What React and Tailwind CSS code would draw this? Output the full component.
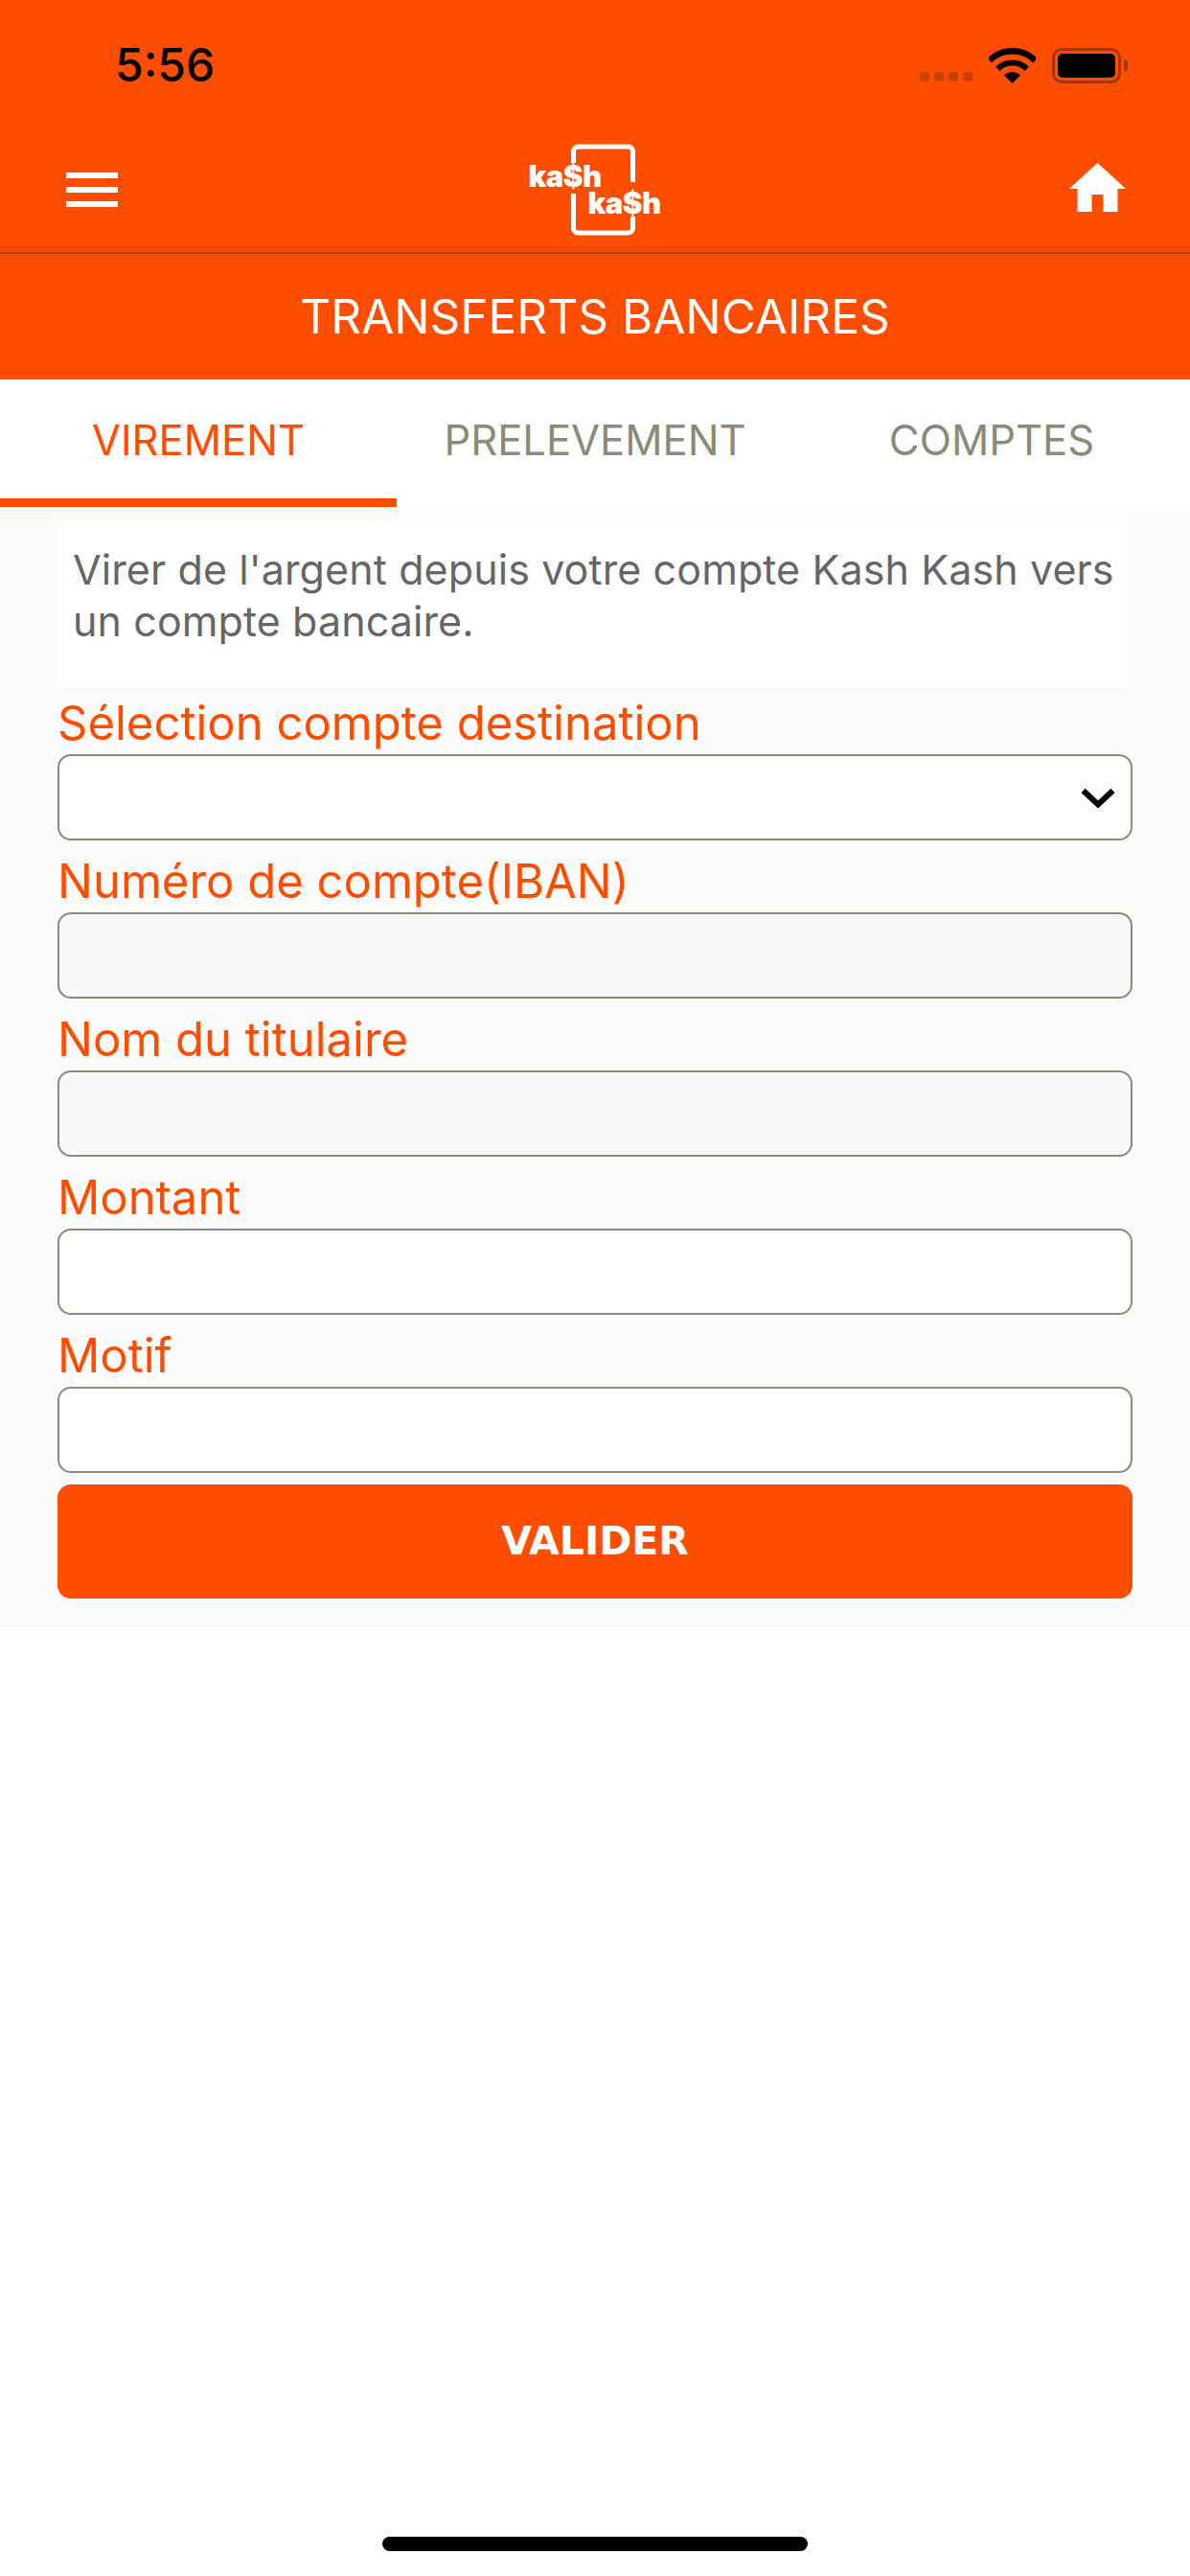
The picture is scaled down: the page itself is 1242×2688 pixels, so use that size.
const fields = [
  { label: 'Numéro de compte(IBAN)', disabled: true },
  { label: 'Nom du titulaire', disabled: true },
  { label: 'Montant' },
  { label: 'Motif' },
];

const StatusBar = () => (
  <div className="h-[136px] flex items-center justify-between pl-[120px] pr-[65px]">
    <span className="text-[48px] font-medium text-black leading-none font-['Inter',sans-serif]">5:56</span>
    <div className="flex items-center">
      <div className="flex gap-[5px] mt-[24px] mr-[17px]">
        <div className="w-[10px] h-[10px] rounded-[3px] bg-[#c94000]" />
        <div className="w-[10px] h-[10px] rounded-[3px] bg-[#c94000]" />
        <div className="w-[10px] h-[10px] rounded-[3px] bg-[#c94000]" />
        <div className="w-[10px] h-[10px] rounded-[3px] bg-[#c94000]" />
      </div>
      <svg width="49" height="37" viewBox="0 0 49 37" className="mr-[17px]">
        <path d="M0.64 13.14A33.75 33.75 0 0 1 48.36 13.14" fill="none" stroke="#000" strokeWidth="6.5" />
        <path d="M9.3 21.8A21.5 21.5 0 0 1 39.7 21.8" fill="none" stroke="#000" strokeWidth="6" />
        <path d="M24.5 37L16 28.5A12 12 0 0 1 33 28.5Z" fill="#000" />
      </svg>
      <div className="w-[72px] h-[37px] rounded-[10px] border-[3px] border-[#a83300] p-[3px]">
        <div className="w-full h-full rounded-[5px] bg-black" />
      </div>
      <div className="w-[4px] h-[13px] ml-[3px] rounded-r-full bg-[#a83300]" />
    </div>
  </div>
);

const Logo = () => (
  <div className="relative w-[136px] h-[96px]">
    <svg width="136" height="96" viewBox="0 0 136 96" className="block">
      <path
        d="M46.5 20V8a5 5 0 0 1 5-5H103.5a5 5 0 0 1 5 5V40M108.5 76V88a5 5 0 0 1-5 5H51.5a5 5 0 0 1-5-5V52"
        fill="none"
        stroke="#fff"
        strokeWidth="5"
      />
    </svg>
    <span className="absolute left-0 top-[18px] text-[31px] font-black tracking-[-0.5px] leading-none text-white font-['Inter',sans-serif]">ka$h</span>
    <span className="absolute left-[62px] top-[46px] text-[31px] font-black tracking-[-0.5px] leading-none text-white font-['Inter',sans-serif]">ka$h</span>
  </div>
);

const Header = () => (
  <div className="bg-[#ff4d00]">
    <StatusBar />
    <div className="h-[129px] border-b-2 border-[#a8430f] flex items-center justify-between pl-[69px] pr-[67px] pb-[3px]">
      <div className="flex flex-col gap-[9px] w-[54px]">
        <div className="h-[6px] bg-white" />
        <div className="h-[6px] bg-white" />
        <div className="h-[6px] bg-white" />
      </div>
      <Logo />
      <svg width="59" height="51" viewBox="0 0 59 51" fill="#fff" className="mb-[5px]">
        <path d="M29.5 0L59 27H50.5V51H35.5V33H23.5V51H8.5V27H0Z" />
      </svg>
    </div>
    <div className="h-[131px] flex items-center justify-center text-[49.5px] text-white font-['Inter',sans-serif]">
      TRANSFERTS BANCAIRES
    </div>
  </div>
);

const Tabs = () => (
  <div className="grid grid-cols-3 h-[133px] bg-white text-[43.5px] font-['Inter',sans-serif]">
    <div className="flex items-center justify-center border-b-[9px] border-[#ff4d00] text-[#ff4d00] pt-[4px]">VIREMENT</div>
    <div className="flex items-center justify-center text-[#8c8a78] pb-[5px]">PRELEVEMENT</div>
    <div className="flex items-center justify-center text-[#8c8a78] pb-[5px]">COMPTES</div>
  </div>
);

const Label = ({ children }) => (
  <label className="block h-[54px] text-[49px] leading-[44px] text-[#ff4d00]">{children}</label>
);

const inputClass = 'block w-full h-[90px] rounded-[14px] border-2 border-[#8c8a78] outline-none';

const App = () => (
  <div className="relative h-[2688px] bg-white font-['Inter',sans-serif]">
    <Header />
    <Tabs />
    <div className="bg-[#fbfbfb] px-[60px] pt-[14px] pb-[31px]">
      <p className="bg-white h-[174px] pl-[16px] pr-[6px] pt-[24px] text-[43px] tracking-[0.1px] leading-[54px] text-[#666]">
        Virer de l'argent depuis votre compte Kash Kash vers un compte bancaire.
      </p>
      <div className="pt-[16px]">
        <Label>Sélection compte destination</Label>
        <div className="relative">
          <select className={`${inputClass} bg-white appearance-none`} />
          <svg width="36" height="22" viewBox="0 0 36 22" className="absolute right-[18px] top-[35px]">
            <path d="M2.5 3L18 17.5L33.5 3" fill="none" stroke="#000" strokeWidth="6" />
          </svg>
        </div>
      </div>
      {fields.map((field) => (
        <div key={field.label} className="pt-[21px]">
          <Label>{field.label}</Label>
          <input
            disabled={field.disabled}
            className={`${inputClass} ${field.disabled ? 'bg-[#f9f9f9]' : 'bg-white'}`}
          />
        </div>
      ))}
      <button className="block w-full h-[119px] mt-[12px] rounded-[14px] bg-[#ff4d00] text-white text-[41px] font-bold font-['DejaVu_Sans',sans-serif]">
        VALIDER
      </button>
    </div>
    <div className="absolute left-[399px] bottom-[26px] w-[444px] h-[15px] rounded-full bg-black" />
  </div>
);

export default App;
